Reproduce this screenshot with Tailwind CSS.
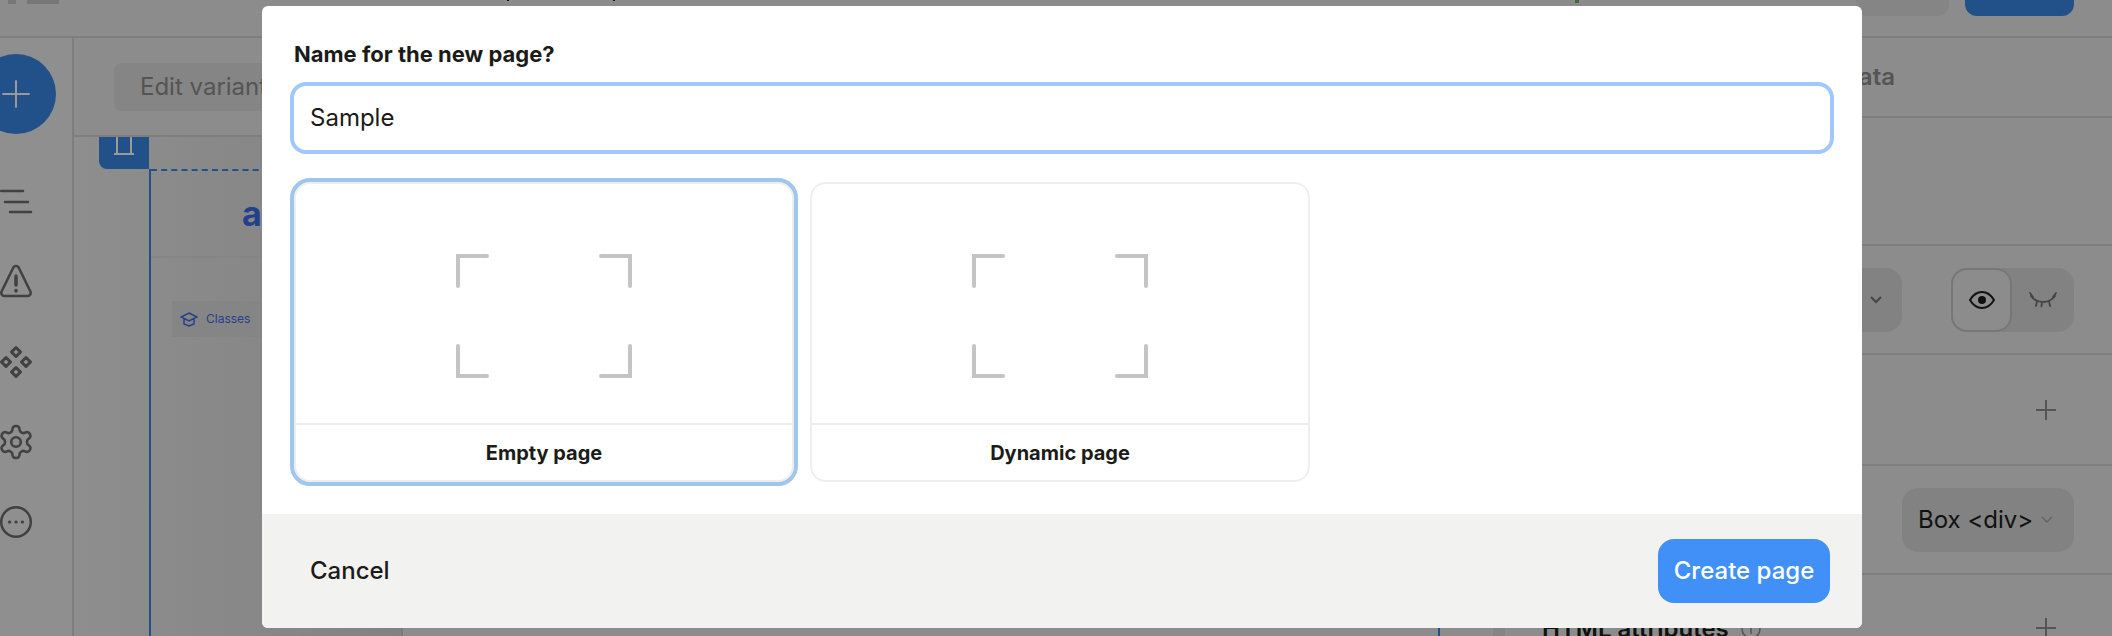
<!DOCTYPE html>
<html>

<head>
  <title>New page</title>
  <script src="https://cdn.jsdelivr.net/npm/@tailwindcss/browser@4"></script>
</head>

<body class="m-0 h-[636px] w-[2112px] overflow-hidden bg-[#8c8c8c] font-['Inter',sans-serif] text-[#1b1b18]">
  <div class="relative h-[636px] w-[2112px] overflow-hidden">

    <!-- dimmed editor behind the modal -->
    <div class="absolute inset-0 flex flex-col">
      <!-- top bar -->
      <div class="flex h-[38px] shrink-0 border-b-2 border-[#7e7e7e] pr-[38px]">
        <div class="ml-2 h-1 w-2 bg-[#777777]"></div>
        <div class="ml-[11px] h-1 w-8 bg-[#777777]"></div>
        <div class="ml-[448px] h-px w-0.5 bg-[#111111]"></div>
        <div class="ml-[104px] h-px w-0.5 bg-[#111111]"></div>
        <div class="ml-[960px] h-[3px] w-1 bg-[#3c6e3c]"></div>
        <div class="ml-auto h-4 w-[93px] rounded-b-xl bg-[#858585]"></div>
        <div class="ml-4 h-4 w-[109px] rounded-b-xl bg-[#225088]"></div>
      </div>

      <div class="flex flex-1">
        <!-- icon rail -->
        <div class="relative w-[74px] shrink-0 border-r-2 border-[#7e7e7e] bg-[#8f8f8f]">
          <div class="absolute left-[-24px] top-4 flex h-20 w-20 items-center justify-center rounded-full bg-[#225088]">
            <svg width="28" height="28" viewBox="0 0 28 28" fill="none" stroke="#9a9a9a" stroke-width="2" stroke-linecap="round"><path d="M14 1v26M1 14h26"/></svg>
          </div>
          <svg class="absolute left-0 top-[150px]" width="34" height="360" viewBox="0 0 34 360" fill="none" stroke="#414141" stroke-width="2.500" stroke-linecap="round" stroke-linejoin="round">
            <path d="M1 3h22M5 14h23M10 24h21"/>
            <path d="M16 78c-1.200 0-2.200.6-2.800 1.700L1.600 103.500c-1 2 .4 4.500 2.800 4.500h23.200c2.400 0 3.800-2.500 2.800-4.500L18.800 79.700C18.200 78.600 17.200 78 16 78z"/>
            <path d="M16 88v9M16 102.500v.5" stroke-width="3.500"/>
            <path d="M16 159.500l4.500 4.500-4.500 4.500-4.500-4.500zM6 169.500l4.500 4.500-4.500 4.500L1.500 174zM26 169.500l4.500 4.500-4.500 4.500-4.500-4.500zM16 179.500l4.500 4.500-4.500 4.500-4.500-4.500z" stroke-width="3"/>
            <g transform="translate(-3.200 234.800) scale(1.600)" stroke-width="1.600">
              <path d="M12.220 2h-.44a2 2 0 0 0-2 2v.18a2 2 0 0 1-1 1.730l-.43.25a2 2 0 0 1-2 0l-.15-.08a2 2 0 0 0-2.730.73l-.22.38a2 2 0 0 0 .73 2.730l.15.1a2 2 0 0 1 1 1.720v.51a2 2 0 0 1-1 1.740l-.15.09a2 2 0 0 0-.73 2.730l.22.38a2 2 0 0 0 2.730.73l.15-.08a2 2 0 0 1 2 0l.43.25a2 2 0 0 1 1 1.730V20a2 2 0 0 0 2 2h.44a2 2 0 0 0 2-2v-.18a2 2 0 0 1 1-1.730l.43-.25a2 2 0 0 1 2 0l.15.08a2 2 0 0 0 2.730-.73l.22-.39a2 2 0 0 0-.73-2.730l-.15-.08a2 2 0 0 1-1-1.740v-.5a2 2 0 0 1 1-1.740l.15-.09a2 2 0 0 0 .73-2.730l-.22-.38a2 2 0 0 0-2.730-.73l-.15.08a2 2 0 0 1-2 0l-.43-.25a2 2 0 0 1-1-1.730V4a2 2 0 0 0-2-2z"/>
              <circle cx="12" cy="12" r="3"/>
            </g>
            <circle cx="16" cy="334" r="14.800"/>
            <path d="M9.500 334h.3M15.900 334h.3M22.200 334h.3" stroke-width="3"/>
          </svg>
        </div>

        <!-- canvas -->
        <div class="flex min-w-0 flex-1 flex-col">
          <div class="flex h-[99px] shrink-0 items-center border-b-2 border-[#7e7e7e] pl-10">
            <div class="flex h-12 w-[200px] items-center rounded-lg bg-[#858585] pl-[26px] text-2xl text-[#545454]">Edit variants</div>
          </div>
          <div class="flex flex-1">
            <div class="w-[329px] shrink-0 border-r-2 border-[#7a7a7a] bg-linear-to-r from-[#8e8e8e] to-[#828282]">
              <div class="h-8 w-[50px] translate-x-[25px] rounded-bl-lg bg-[#225088]">
                <svg class="ml-[14px]" width="22" height="18" viewBox="0 0 22 18" fill="none" stroke="#9a9a9a" stroke-width="2"><path d="M4 0v17M18 0v17M1 17h20"/></svg>
              </div>
              <div class="ml-[75px] h-full border-l-2 border-[#225088]">
                <div class="flex h-[87px] items-center border-t-2 border-dashed border-[#225088] pl-[91px] text-[34px] font-bold leading-none text-[#24408c]">a</div>
                <div class="border-t-2 border-[#858585] pl-[21px] pt-[43px]">
                  <div class="flex h-9 w-[160px] items-center gap-2 bg-[#858585] pl-2 text-[12px] text-[#24408c]">
                    <svg width="18" height="16" viewBox="0 0 18 16" fill="none" stroke="#24408c" stroke-width="1.500"><path d="M9 2l8 4-8 4-8-4zM4 8v5l5 2 5-2V8"/></svg>
                    Classes
                  </div>
                </div>
              </div>
            </div>
            <div class="flex-1 border-r-2 border-[#225088]"></div>
            <div class="w-[53px] shrink-0"></div>
          </div>
        </div>

        <!-- settings panel -->
        <div class="w-[619px] shrink-0 border-l-[12px] border-[#858585]">
          <div class="flex h-[80px] items-center justify-end border-b-2 border-[#7e7e7e] pr-[217px] text-2xl font-semibold text-[#545454]">Data</div>
          <div class="h-[128px] border-b-2 border-[#7e7e7e]"></div>
          <div class="flex h-[109px] items-center justify-end border-b-2 border-[#7e7e7e] pr-[38px]">
            <div class="flex h-16 w-[60px] items-center justify-end rounded-r-2xl bg-[#828282] pr-5">
              <svg width="12" height="8" viewBox="0 0 12 8" fill="none" stroke="#444444" stroke-width="2"><path d="M1 1l5 5 5-5"/></svg>
            </div>
            <div class="ml-[49px] flex h-16 w-[123px] rounded-2xl bg-[#828282]">
              <div class="flex w-[61px] items-center justify-center rounded-2xl border-2 border-[#777777] bg-[#8c8c8c]">
                <svg width="26" height="18" viewBox="0 0 26 18" fill="none" stroke="#111111" stroke-width="2"><path d="M1 9c3-5 7-8 12-8s9 3 12 8c-3 5-7 8-12 8S4 14 1 9z"/><circle cx="13" cy="9" r="4" fill="#111111" stroke="none"/></svg>
              </div>
              <div class="flex flex-1 items-center justify-center">
                <svg width="28" height="16" viewBox="0 0 28 16" fill="none" stroke="#444444" stroke-width="1.800" stroke-linecap="round"><path d="M2 4c3 4 7 6 12 6s9-2 12-6M1 1l3 4M27 1l-3 4M8 9l-1 5M20 9l1 5M13 10l-.5 4.500"/></svg>
              </div>
            </div>
          </div>
          <div class="flex h-[111px] items-center justify-end border-b-2 border-[#7e7e7e] pr-14">
            <svg width="20" height="20" viewBox="0 0 20 20" fill="none" stroke="#555555" stroke-width="2"><path d="M10 0v20M0 10h20"/></svg>
          </div>
          <div class="flex h-[109px] items-center justify-end border-b-2 border-[#7e7e7e] pr-[38px]">
            <div class="flex h-16 w-[172px] items-center gap-2 rounded-2xl bg-[#828282] pl-4 text-2xl text-[#111111]">
              Box &lt;div&gt;
              <svg width="12" height="8" viewBox="0 0 12 8" fill="none" stroke="#666666" stroke-width="1.500"><path d="M1 1l5 5 5-5"/></svg>
            </div>
          </div>
          <div class="flex items-start justify-between pl-[37px] pr-14 pt-9">
            <div class="flex items-center gap-3 text-2xl font-semibold leading-9 text-[#111111]">
              HTML attributes
              <svg width="20" height="20" viewBox="0 0 20 20" fill="none" stroke="#555555" stroke-width="1.500"><circle cx="10" cy="10" r="9"/><path d="M10 9v6M10 5v1.500"/></svg>
            </div>
            <svg class="mt-[7px]" width="20" height="20" viewBox="0 0 20 20" fill="none" stroke="#555555" stroke-width="2"><path d="M10 0v20M0 10h20"/></svg>
          </div>
        </div>
      </div>
    </div>

    <!-- new page modal -->
    <div class="absolute left-[262px] top-[6px] flex h-[622px] w-[1600px] flex-col overflow-hidden rounded-md bg-white">
      <div class="flex flex-1 flex-col px-8 pt-[33px]">
        <h2 class="text-[22px] font-bold leading-[30px]">Name for the new page?</h2>
        <div class="mt-[13px] flex h-[72px] w-[1544px] -translate-x-1 items-center rounded-2xl border-4 border-[#a0c8fc] pl-4 text-2xl">Sample</div>
        <div class="mt-[28px] flex gap-4">
          <div class="flex h-[300px] w-[500px] flex-col rounded-2xl border-2 border-[#eeeeee] outline-4 outline-[#a0c6ee]">
            <div class="flex h-[239px] justify-center pt-[70px]">
              <svg width="176" height="124" viewBox="0 0 176 124" fill="none" stroke="#c4c4c4" stroke-width="4" stroke-linecap="round" stroke-linejoin="miter"><path d="M2 32V2h29M145 2h29v30M2 92v30h29M145 122h29V92"/></svg>
            </div>
            <div class="flex flex-1 items-center justify-center border-t-2 border-[#eeeeee] text-xl font-bold">Empty page</div>
          </div>
          <div class="flex h-[300px] w-[500px] flex-col rounded-2xl border-2 border-[#eeeeee]">
            <div class="flex h-[239px] justify-center pt-[70px]">
              <svg width="176" height="124" viewBox="0 0 176 124" fill="none" stroke="#c4c4c4" stroke-width="4" stroke-linecap="round" stroke-linejoin="miter"><path d="M2 32V2h29M145 2h29v30M2 92v30h29M145 122h29V92"/></svg>
            </div>
            <div class="flex flex-1 items-center justify-center border-t-2 border-[#eeeeee] text-xl font-bold">Dynamic page</div>
          </div>
        </div>
      </div>
      <div class="flex h-[114px] shrink-0 items-center justify-between bg-[#f2f2f1] pl-12 pr-8">
        <span class="text-2xl font-medium">Cancel</span>
        <button class="flex h-16 w-[172px] items-center justify-center rounded-2xl bg-[#4090f8] text-2xl font-medium text-white">Create page</button>
      </div>
    </div>
  </div>
</body>

</html>
